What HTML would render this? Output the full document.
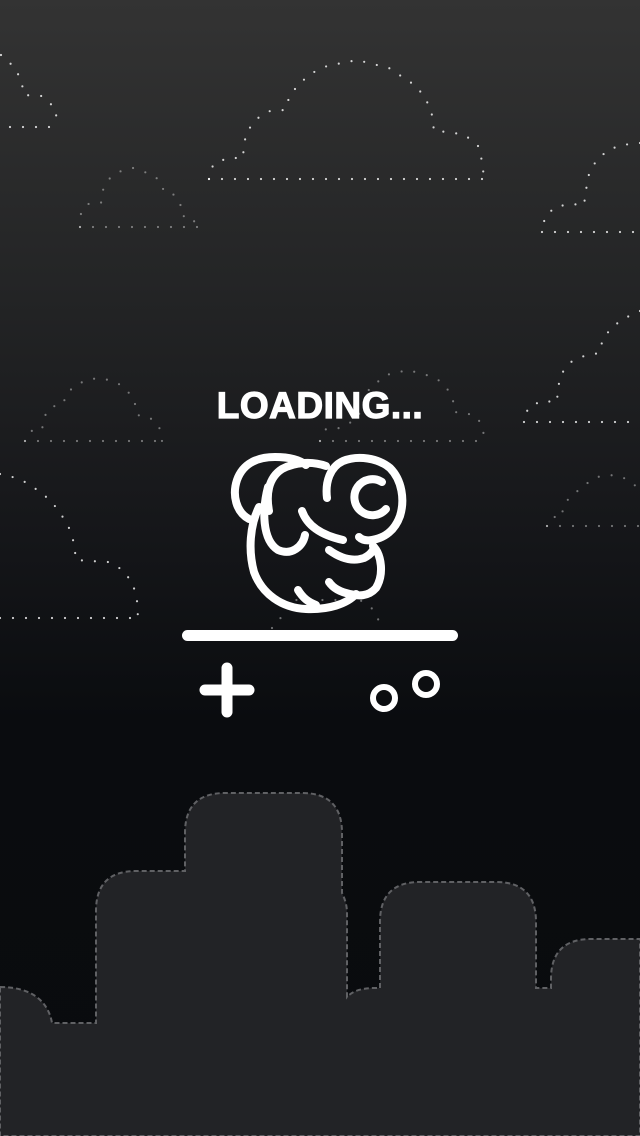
<!DOCTYPE html>
<html><head><meta charset="utf-8"><style>
html,body{margin:0;padding:0;width:640px;height:1136px;overflow:hidden;background:#0a0c0f}
body{background:linear-gradient(#333333 0px,#242526 280px,#16171a 520px,#0a0c0f 720px,#090b0e 1136px);position:relative}
svg{position:absolute;left:0;top:0}
.t{position:absolute;left:0;width:640px;top:384px;line-height:44px;text-align:center;font-family:"Liberation Sans",sans-serif;font-weight:bold;font-size:37px;letter-spacing:0.5px;color:#fff;-webkit-text-stroke:1.2px #fff}
</style></head><body>
<svg width="640" height="1136" viewBox="0 0 640 1136">
<g fill="none" stroke-linecap="round" stroke-width="2.2" stroke-dasharray="0 13">
<g stroke="rgba(255,255,255,0.8)">
<polyline points="209,179 213,165 227,158 243,158 244,143 248,130 258,118 270,111 285,110 290,95 300,83 312,73 327,66 357,60 389,68 416,86 426,99 432,115 434,131 449,132 465,135 478,146 482,161 484,178"/>
<line x1="209" y1="179" x2="486" y2="179"/>
<polyline points="1,55 13,66 21,79 24,95 42,96 55,108 58,127"/>
<line x1="10" y1="127" x2="60" y2="127"/>
<polyline points="640,143 622,145 608,150 596,161 589,174 586,190 584,205 570,204 555,207 545,217 542,232"/>
<line x1="542" y1="232" x2="640" y2="232"/>
<polyline points="640,311 625,318 612,327 603,339 599,353 584,356 571,362 562,373 558,387 557,402 541,401 528,408 524,422"/>
<line x1="524" y1="422" x2="640" y2="422"/>
<polyline points="0,474 10,476 25,482 39,491 51,501 61,514 69,528 74,543 76,560 91,561 108,562 123,570 133,584 137,601 138,618"/>
<line x1="0" y1="618" x2="140" y2="618"/>
</g>
<g stroke="rgba(255,255,255,0.4)">
<polyline points="80,227 81,213 88,204 101,203 103,190 109,179 121,171 133,168 153,175 161,182 164,192 175,195 181,206 182,216 192,217 197,227"/>
<line x1="80" y1="227" x2="198" y2="227"/>
<polyline points="25,441 30,431 42,430 44,417 51,407 63,404 67,393 76,385 87,380 98,378 109,380 121,385 129,393 135,404 137,415 149,417 159,426 162,441"/>
<line x1="25" y1="441" x2="163" y2="441"/>
<polyline points="320,441 326,429 340,428 355,420 365,405 369,389 386,375 408,370 430,376 440,381 448,390 453,400 454,412 466,413 477,417 483,428 484,440"/>
<line x1="320" y1="441" x2="485" y2="441"/>
<polyline points="547,526 552,517 562,517 563,507 569,498 586,484 597,477 610,475 622,477 633,483 640,492"/>
<line x1="547" y1="526" x2="640" y2="526"/>
<polyline points="272,628 284,614 292,600 360,600 374,610 382,628"/>
</g>
</g>
<g fill="none" stroke="#fff" stroke-width="8" stroke-linecap="round" stroke-linejoin="round">
<path d="M249,519 C236,512 232,495 237,480 C243,463 258,457 275,457 C289,457 300,460 306,465"/>
<path d="M259,507 C250,525 248,550 254,572 C262,594 282,608 306,609 C328,610 347,604 356,594"/>
<path d="M269,511 C266,495 268,478 282,469 C295,462 312,461 326,466"/>
<path d="M327,498 C325,482 330,467 343,461 C358,455 378,458 390,468 C402,480 405,500 400,516 C395,530 385,538 372,540 C366,541 362,540 359,537"/>
<path d="M382,482 A18,18 0 1 0 386,509"/>
<path d="M268,487 C262,510 262,540 278,550 C292,556 303,546 305,535"/>
<path d="M302,511 C308,528 325,536 343,540"/>
<path d="M329,550 C340,558 352,562 364,558 C372,554 375,548 373,546"/>
<path d="M373,546 C382,555 384,575 376,588 C368,597 358,596 350,594 C340,592 333,588 329,582"/>
<path d="M298,590 C303,598 308,602 316,605"/>
</g>
<rect x="182" y="630" width="276" height="11" rx="5.5" fill="#fff"/>
<g stroke="#fff" stroke-width="11" stroke-linecap="round"><line x1="227" y1="668" x2="227" y2="712"/><line x1="205" y1="690" x2="249" y2="690"/></g>
<circle cx="384" cy="698" r="11" fill="none" stroke="#fff" stroke-width="6"/>
<circle cx="426" cy="684" r="11" fill="none" stroke="#fff" stroke-width="6"/>
<path d="M0,987 C30,987 48,1000 52,1023 L96,1023 L96,911 Q96,871 136,871 L185,871 L185,833 Q185,793 225,793 L302,793 Q342,793 342,833 L342,893 Q347,903 347,913 L347,997 Q355,988 375,988 L380,988 L380,922 Q380,882 420,882 L496,882 Q536,882 536,922 L536,988 L551,988 L551,979 Q551,939 591,939 L640,939 L640,1136 L0,1136 Z" fill="#222326" stroke="#606164" stroke-width="2" stroke-dasharray="5 3"/>
</svg>
<div class="t">LOADING...</div>
</body></html>
